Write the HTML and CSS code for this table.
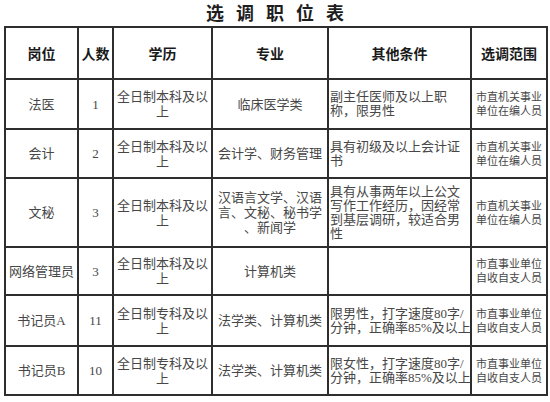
FILE: index.html
```html
<!DOCTYPE html>
<html lang="zh-CN">
<head>
<meta charset="utf-8">
<title>选调职位表</title>
<link rel="stylesheet" href="styles.css">
</head>
<body>
<div class="title">选调职位表</div>
<table class="jobs">
  <colgroup>
    <col class="c-post">
    <col class="c-num">
    <col class="c-edu">
    <col class="c-major">
    <col class="c-note">
    <col class="c-scope">
  </colgroup>
  <thead>
    <tr class="r-head">
      <th>岗位</th><th>人数</th><th>学历</th><th>专业</th><th>其他条件</th><th>选调范围</th>
    </tr>
  </thead>
  <tbody>
    <tr class="r-1">
      <td>法医</td><td>1</td><td>全日制本科及以<br>上</td><td>临床医学类</td>
      <td class="note">副主任医师及以上职<br>称，限男性</td>
      <td class="scope">市直机关事业<br>单位在编人员</td>
    </tr>
    <tr class="r-2">
      <td>会计</td><td>2</td><td>全日制本科及以<br>上</td><td>会计学、财务管理</td>
      <td class="note">具有初级及以上会计证<br>书</td>
      <td class="scope">市直机关事业<br>单位在编人员</td>
    </tr>
    <tr class="r-3">
      <td>文秘</td><td>3</td><td>全日制本科及以<br>上</td><td>汉语言文学、汉语<br>言、文秘、秘书学<br>、新闻学</td>
      <td class="note">具有从事两年以上公文<br>写作工作经历，因经常<br>到基层调研，较适合男<br>性</td>
      <td class="scope">市直机关事业<br>单位在编人员</td>
    </tr>
    <tr class="r-4">
      <td>网络管理员</td><td>3</td><td>全日制本科及以<br>上</td><td>计算机类</td>
      <td class="note"></td>
      <td class="scope">市直事业单位<br>自收自支人员</td>
    </tr>
    <tr class="r-5">
      <td>书记员A</td><td>11</td><td>全日制专科及以<br>上</td><td>法学类、计算机类</td>
      <td class="note">限男性，打字速度80字/<br>分钟，正确率85%及以上</td>
      <td class="scope">市直事业单位<br>自收自支人员</td>
    </tr>
    <tr class="r-6">
      <td>书记员B</td><td>10</td><td>全日制专科及以<br>上</td><td>法学类、计算机类</td>
      <td class="note">限女性，打字速度80字/<br>分钟，正确率85%及以上</td>
      <td class="scope">市直事业单位<br>自收自支人员</td>
    </tr>
  </tbody>
</table>
</body>
</html>
```

FILE: styles.css
```css
* { box-sizing: border-box; }

body {
  margin: 0;
  background: #fff;
  color: #474747;
  font-family: "Liberation Serif", "Noto Sans CJK SC", serif;
}

.title {
  padding: 2px 0 4px 12px;
  font-family: "Noto Sans CJK SC", sans-serif;
  font-size: 18px;
  font-weight: 700;
  line-height: 20px;
  letter-spacing: 12px;
  text-align: center;
  color: #1e1e1e;
}

.jobs {
  margin-left: 4px;
  width: 544px;
  border-collapse: collapse;
  table-layout: fixed;
}

.c-post { width: 73px; }
.c-num { width: 35px; }
.c-edu { width: 99px; }
.c-major { width: 116px; }
.c-note { width: 143px; }
.c-scope { width: 76px; }

.jobs th,
.jobs td {
  border: 2px solid #2e2e2e;
  padding: 0 2px;
  text-align: center;
  vertical-align: middle;
  font-size: 13px;
  line-height: 15px;
  font-weight: 400;
  white-space: nowrap;
}

.jobs th {
  font-family: "Noto Sans CJK SC", sans-serif;
  font-size: 14px;
  font-weight: 700;
  color: #1a1a1a;
}

.jobs td.note {
  padding-left: 1px;
  text-align: left;
  line-height: 14px;
}

.jobs td.scope {
  font-size: 11px;
  line-height: 14px;
}

.r-head { height: 52px; }
.r-1 { height: 50px; }
.r-2 { height: 49px; }
.r-3 { height: 69px; }
.r-4 { height: 48px; }
.r-5 { height: 51px; }
.r-6 { height: 49px; }
```
